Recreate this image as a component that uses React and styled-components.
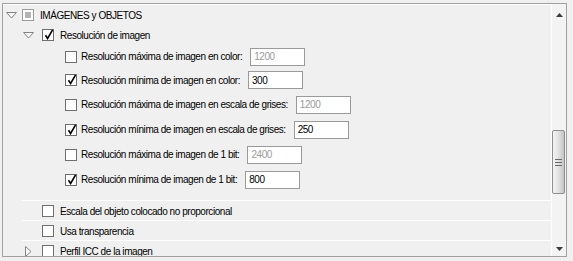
import React from "react";
import styled, { createGlobalStyle } from "styled-components";

const Global = createGlobalStyle`
  html, body { margin: 0; padding: 0; background: #f0f0f0; }
  body { font-family: "Liberation Sans", Arial, sans-serif; font-size: 10px; letter-spacing: -0.45px; color: #000; }
`;

const Page = styled.div`
  width: 573px;
  height: 261px;
  padding: 3px 0 0 2px;
  box-sizing: border-box;
`;

const Frame = styled.div`
  width: 565px;
  height: 254px;
  box-sizing: border-box;
  border: 1px solid #a0a0a0;
  display: flex;
  overflow: hidden;
  background: #f0f0f0;
`;

const Content = styled.div`
  flex: 1;
  border-top: 1px solid #ffffff;
  border-right: 1px solid #ffffff;
  display: flex;
  flex-direction: column;
  overflow: hidden;
`;

const Row = styled.div`
  display: flex;
  align-items: center;
  flex-shrink: 0;
  height: ${(p) => p.$h || 20}px;
  padding-left: ${(p) => p.$indent || 0}px;
  box-sizing: border-box;
  ${(p) => (p.$line ? "border-top: 1px solid #ffffff; padding-top: 1px; margin-left: 19px; padding-left: " + (p.$indent - 19) + "px;" : "")}
`;

const Twisty = styled.span`
  width: ${(p) => p.$w}px;
  display: inline-flex;
  align-items: center;
  flex-shrink: 0;
`;

const Box = styled.span`
  width: 12px;
  height: 12px;
  box-sizing: border-box;
  border: 1px solid ${(p) => (p.$mixed ? "#9c9c9c" : "#6f6f6f")};
  background: #ffffff;
  position: relative;
  flex-shrink: 0;
  margin-right: ${(p) => p.$gap || 5}px;
  display: inline-flex;
  align-items: center;
  justify-content: center;
`;

const Mixed = styled.span`
  width: 6px;
  height: 6px;
  background: #b4b4b4;
`;

const Label = styled.span`
  white-space: nowrap;
  color: #000;
`;

const Field = styled.span`
  width: 55px;
  height: 18px;
  box-sizing: border-box;
  border: 1px solid #9a9a9a;
  background: #ffffff;
  margin-left: 8px;
  padding-left: 3px;
  display: inline-flex;
  align-items: center;
  color: ${(p) => (p.$disabled ? "#9a9a9a" : "#000")};
`;

const Scrollbar = styled.div`
  width: 14px;
  background: #f3f3f3;
  display: flex;
  flex-direction: column;
  align-items: center;
`;

const Arrow = styled.span`
  height: 16px;
  display: flex;
  align-items: ${(p) => (p.$down ? "flex-start" : "flex-end")};
  justify-content: center;
  width: 100%;
  box-sizing: border-box;
  padding: ${(p) => (p.$down ? "7px 0 0" : "0 0 3px")};
`;

const Track = styled.div`
  flex: 1;
  width: 100%;
  display: flex;
  flex-direction: column;
  padding-top: 110px;
  box-sizing: border-box;
`;

const Thumb = styled.div`
  width: 13px;
  height: 64px;
  box-sizing: border-box;
  border: 1px solid #8e8e8e;
  border-radius: 2px;
  background: linear-gradient(to right, #f4f4f4 0%, #e4e4e4 45%, #d0d0d0 80%, #c4c4c4 100%);
  display: flex;
  align-items: center;
  justify-content: center;
`;

const Down = () => (
  <svg width="11" height="7" viewBox="0 0 11 7">
    <polygon points="0.5,0.5 10.5,0.5 5.5,6" fill="#f7f7f7" stroke="#858585" strokeWidth="1" />
  </svg>
);
const Right = () => (
  <svg width="7" height="11" viewBox="0 0 7 11">
    <polygon points="0.5,0.5 6,5.5 0.5,10.5" fill="#f7f7f7" stroke="#858585" strokeWidth="1" />
  </svg>
);
const Check = () => (
  <svg width="10" height="11" viewBox="0 0 10 11" style={{ position: "absolute", left: 1, top: -1 }}>
    <path d="M1.5 6.2 L3.6 9.5 L8.6 0.8" fill="none" stroke="#000" strokeWidth="1.6" />
  </svg>
);

const CheckBox = ({ checked, mixed, gap }) => (
  <Box $mixed={mixed} $gap={gap}>
    {mixed && <Mixed />}
    {checked && <Check />}
  </Box>
);

const subs = [
  { label: "Resolución máxima de imagen en color:", value: "1200", on: false, h: 23 },
  { label: "Resolución mínima de imagen en color:", value: "300", on: true, h: 24 },
  { label: "Resolución máxima de imagen en escala de grises:", value: "1200", on: false, h: 25 },
  { label: "Resolución mínima de imagen en escala de grises:", value: "250", on: true, h: 25 },
  { label: "Resolución máxima de imagen de 1 bit:", value: "2400", on: false, h: 25 },
  { label: "Resolución mínima de imagen de 1 bit:", value: "800", on: true, h: 25 },
];

export default function App() {
  return (
    <>
      <Global />
      <Page>
        <Frame>
          <Content>
            <Row $h={20} $indent={3}>
              <Twisty $w={16}><Down /></Twisty>
              <CheckBox mixed gap={6} />
              <Label>IMÁGENES y OBJETOS</Label>
            </Row>
            <Row $h={20} $indent={20}>
              <Twisty $w={19}><Down /></Twisty>
              <CheckBox checked gap={6} />
              <Label>Resolución de imagen</Label>
            </Row>
            {subs.map((s) => (
              <Row key={s.label} $h={s.h} $indent={62}>
                <CheckBox checked={s.on} gap={4} />
                <Label>{s.label}</Label>
                <Field $disabled={!s.on}>{s.value}</Field>
              </Row>
            ))}
            <Row $h={8} />
            <Row $h={20} $indent={39} $line>
              <CheckBox gap={6} />
              <Label>Escala del objeto colocado no proporcional</Label>
            </Row>
            <Row $h={20} $indent={39} $line>
              <CheckBox gap={6} />
              <Label>Usa transparencia</Label>
            </Row>
            <Row $h={20} $indent={22} $line>
              <Twisty $w={17}><Right /></Twisty>
              <CheckBox gap={6} />
              <Label>Perfil ICC de la imagen</Label>
            </Row>
          </Content>
          <Scrollbar>
            <Arrow>
              <svg width="7" height="4" viewBox="0 0 7 4"><polygon points="3.5,0 7,4 0,4" fill="#3a3a3a" /></svg>
            </Arrow>
            <Track>
              <Thumb>
                <svg width="7" height="7" viewBox="0 0 7 7">
                  <rect x="0" y="0" width="7" height="1" fill="#6a6a6a" />
                  <rect x="0" y="3" width="7" height="1" fill="#6a6a6a" />
                  <rect x="0" y="6" width="7" height="1" fill="#6a6a6a" />
                </svg>
              </Thumb>
            </Track>
            <Arrow $down>
              <svg width="7" height="4" viewBox="0 0 7 4"><polygon points="0,0 7,0 3.5,4" fill="#3a3a3a" /></svg>
            </Arrow>
          </Scrollbar>
        </Frame>
      </Page>
    </>
  );
}
